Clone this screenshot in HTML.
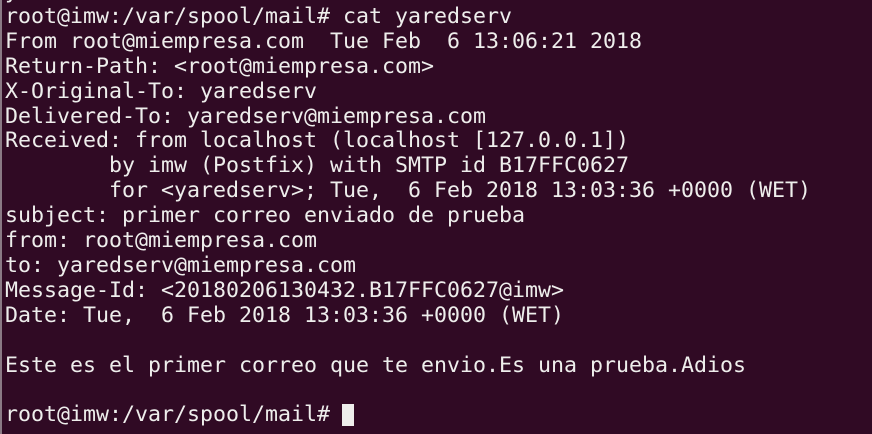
<!DOCTYPE html>
<html><head><style>
html,body{margin:0;padding:0;}
body{width:872px;height:434px;background:#300a24;overflow:hidden;position:relative;}
.l{position:absolute;left:0;top:0;width:2px;height:434px;background:#8a7a85;}
pre{position:absolute;left:5px;top:-20px;margin:0;font-family:"DejaVu Sans Mono","Liberation Mono",monospace;font-size:21.6px;line-height:24.9px;color:#eeeeec;white-space:pre;}
.c{position:absolute;left:342px;top:404px;width:12px;height:22px;background:#eeeeec;}
</style></head><body>
<div class="l"></div>
<pre>y
root@imw:/var/spool/mail# cat yaredserv
From root@miempresa.com  Tue Feb  6 13:06:21 2018
Return-Path: &lt;root@miempresa.com&gt;
X-Original-To: yaredserv
Delivered-To: yaredserv@miempresa.com
Received: from localhost (localhost [127.0.0.1])
        by imw (Postfix) with SMTP id B17FFC0627
        for &lt;yaredserv&gt;; Tue,  6 Feb 2018 13:03:36 +0000 (WET)
subject: primer correo enviado de prueba
from: root@miempresa.com
to: yaredserv@miempresa.com
Message-Id: &lt;20180206130432.B17FFC0627@imw&gt;
Date: Tue,  6 Feb 2018 13:03:36 +0000 (WET)

Este es el primer correo que te envio.Es una prueba.Adios

root@imw:/var/spool/mail# </pre>
<div class="c"></div>
</body></html>
